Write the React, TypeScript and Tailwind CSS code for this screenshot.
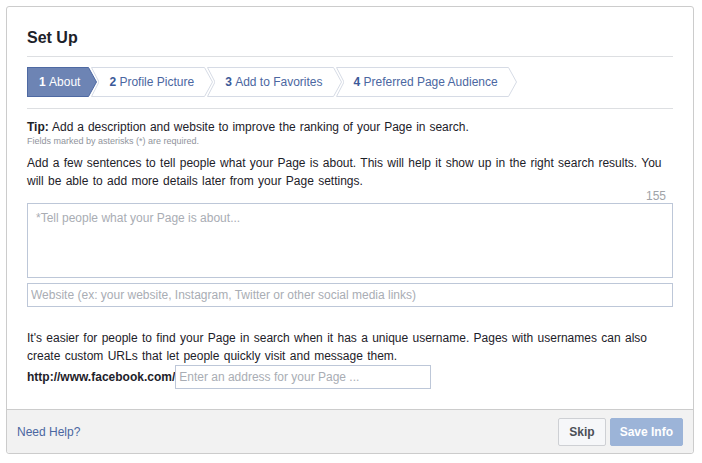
type StepProps = { n: number; label: string; active?: boolean; first?: boolean };

function Step({ n, label, active, first }: StepProps) {
  const stroke = active ? '#4e69a2' : '#d6dbe5';
  const fill = active ? '#6d84b4' : '#ffffff';
  return (
    <div className={`flex h-[30px] ${first ? '' : '-ml-[6px]'}`}>
      {!first && (
        <svg width="8" height="30" className="block shrink-0">
          <polygon points="0.5,0.5 8,0.5 8,29.5 0.5,29.5 8,15" fill={fill} />
          <polyline points="8,0.5 0.5,0.5 8,15 0.5,29.5 8,29.5" fill="none" stroke={stroke} />
        </svg>
      )}
      <div
        className={`flex items-center border-y text-[12px] leading-[16px] ${
          first ? 'border-l pl-[11px] pr-[8px]' : 'pl-[10px] pr-[10px]'
        } ${active ? 'border-[#4e69a2] bg-[#6d84b4] text-white' : 'border-[#d6dbe5] bg-white text-[#4b67a1]'}`}
      >
        <span className={`font-bold ${active ? 'text-white' : 'text-[#3b5998]'}`}>{n}</span>
        <span>&nbsp;{label}</span>
      </div>
      <svg width="9" height="30" className="block shrink-0">
        <polygon points="0,0.5 0.5,0.5 8.5,15 0.5,29.5 0,29.5" fill={fill} />
        <polyline points="0,0.5 0.5,0.5 8.5,15 0.5,29.5 0,29.5" fill="none" stroke={stroke} />
      </svg>
    </div>
  );
}

export default function App() {
  return (
    <div className="min-h-[463px] bg-white p-[6px] font-['Liberation_Sans',Arial,sans-serif] text-[#1d2129]">
      <div className="w-[688px] rounded-[3px] border border-[#cccccc] bg-white">
        {/* body */}
        <div className="px-[20px] pt-[21px] pb-[20px]">
          <h2 className="border-b border-[#dddfe2] pb-[8px] text-[16px] font-bold leading-[20px] text-[#1d2129]">
            Set Up
          </h2>

          <div className="mt-[10px] flex border-b border-[#dddfe2] pb-[11px]">
            <Step n={1} label="About" active first />
            <Step n={2} label="Profile Picture" />
            <Step n={3} label="Add to Favorites" />
            <Step n={4} label="Preferred Page Audience" />
          </div>

          <p className="mt-[10px] text-[12px] leading-[16px] [word-spacing:0.6px]">
            <span className="font-bold">Tip:</span> Add a description and website to improve the ranking of your Page in search.
          </p>
          <p className="text-[9px] leading-[12px] text-[#90949c]">Fields marked by asterisks (*) are required.</p>

          <p className="mt-[7px] text-[12px] leading-[18px] [word-spacing:1px]">
            Add a few sentences to tell people what your Page is about. This will help it show up in the right search
            results. You will be able to add more details later from your Page settings.
          </p>
          <div className="pr-[7px] text-right text-[12px] leading-[12px] text-[#a0a3a8]">155</div>

          <textarea
            className="mt-[1px] block h-[75px] w-full resize-none border border-[#bdc7d8] px-[8px] py-[6px] text-[12px] leading-[16px] outline-none placeholder:text-[#a9adb4]"
            placeholder="*Tell people what your Page is about..."
          />
          <input
            className="mt-[5px] block h-[24px] w-full border border-[#bdc7d8] px-[3px] text-[12px] outline-none placeholder:text-[#a9adb4]"
            placeholder="Website (ex: your website, Instagram, Twitter or other social media links)"
          />

          <p className="mt-[22px] text-[12px] leading-[18px] [word-spacing:1px]">
            It's easier for people to find your Page in search when it has a unique username. Pages with usernames can
            also create custom URLs that let people quickly visit and message them.
          </p>
          <div className="flex items-center">
            <span className="text-[12px] font-bold leading-[18px]">http://www.facebook.com/</span>
            <input
              className="block h-[24px] w-[256px] border border-[#bdc7d8] px-[3px] text-[12px] outline-none placeholder:text-[#a9adb4]"
              placeholder="Enter an address for your Page ..."
            />
          </div>
        </div>

        {/* footer */}
        <div className="flex h-[44px] items-center justify-between rounded-b-[3px] border-t border-[#cccccc] bg-[#f2f2f2] px-[10px]">
          <a className="text-[12px] text-[#4b67a1]">Need Help?</a>
          <div className="flex gap-[4px]">
            <button className="h-[28px] rounded-[2px] border border-[#ced0d4] bg-[#f6f7f9] px-[10px] text-[12px] font-bold text-[#4b4f56]">
              Skip
            </button>
            <button className="h-[28px] rounded-[2px] border border-[#9cb4d8] bg-[#9cb4d8] px-[9px] text-[12px] font-bold text-white">
              Save Info
            </button>
          </div>
        </div>
      </div>
    </div>
  );
}
